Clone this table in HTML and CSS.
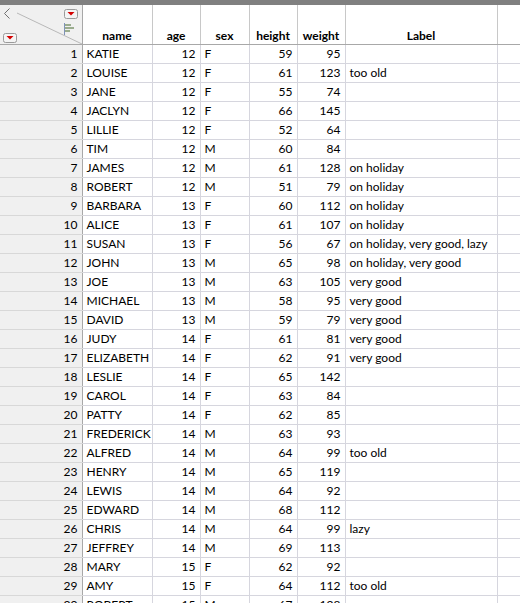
FILE: index.html
```html
<!DOCTYPE html>
<html>
<head>
<meta charset="utf-8">
<link rel="stylesheet" href="styles.css">
</head>
<body>
<div class="topbar"></div>
<table class="grid">
  <colgroup>
    <col class="c-row"><col class="c-name"><col class="c-age"><col class="c-sex"><col class="c-height"><col class="c-weight"><col class="c-label"><col class="c-extra">
  </colgroup>
  <thead>
    <tr>
      <th class="corner">
        <svg width="82" height="39" viewBox="0 0 82 39">
          <line x1="17" y1="8" x2="82" y2="39" stroke="#b8b8b8" stroke-width="1"/>
          <path d="M9.5 3.5 L4.5 8.5 L9.5 13.5" fill="none" stroke="#707070" stroke-width="1"/>
          <rect x="64.5" y="4.5" width="13" height="9" rx="2" fill="#f4f4f4" stroke="#9a9a9a"/>
          <path d="M67.5 7 L74.5 7 L71 10.5 Z" fill="#d40000"/>
          <rect x="3.5" y="28.5" width="13" height="9" rx="2" fill="#f4f4f4" stroke="#9a9a9a"/>
          <path d="M6.5 31 L13.5 31 L10 34.5 Z" fill="#d40000"/>
          <line x1="64.5" y1="18" x2="64.5" y2="30" stroke="#7f93b8" stroke-width="1"/>
          <rect x="65" y="19" width="6" height="2" fill="#9aac8e"/>
          <rect x="65" y="22" width="9" height="2" fill="#9aac8e"/>
          <rect x="65" y="25" width="5" height="2" fill="#9aac8e"/>
        </svg>
      </th>
      <th>name</th><th>age</th><th>sex</th><th>height</th><th>weight</th><th>Label</th><th class="extra"></th>
    </tr>
  </thead>
  <tbody>
    <tr><td class="rn">1</td><td>KATIE</td><td class="n">12</td><td>F</td><td class="n">59</td><td class="n">95</td><td></td><td></td></tr>
    <tr><td class="rn">2</td><td>LOUISE</td><td class="n">12</td><td>F</td><td class="n">61</td><td class="n">123</td><td>too old</td><td></td></tr>
    <tr><td class="rn">3</td><td>JANE</td><td class="n">12</td><td>F</td><td class="n">55</td><td class="n">74</td><td></td><td></td></tr>
    <tr><td class="rn">4</td><td>JACLYN</td><td class="n">12</td><td>F</td><td class="n">66</td><td class="n">145</td><td></td><td></td></tr>
    <tr><td class="rn">5</td><td>LILLIE</td><td class="n">12</td><td>F</td><td class="n">52</td><td class="n">64</td><td></td><td></td></tr>
    <tr><td class="rn">6</td><td>TIM</td><td class="n">12</td><td>M</td><td class="n">60</td><td class="n">84</td><td></td><td></td></tr>
    <tr><td class="rn">7</td><td>JAMES</td><td class="n">12</td><td>M</td><td class="n">61</td><td class="n">128</td><td>on holiday</td><td></td></tr>
    <tr><td class="rn">8</td><td>ROBERT</td><td class="n">12</td><td>M</td><td class="n">51</td><td class="n">79</td><td>on holiday</td><td></td></tr>
    <tr><td class="rn">9</td><td>BARBARA</td><td class="n">13</td><td>F</td><td class="n">60</td><td class="n">112</td><td>on holiday</td><td></td></tr>
    <tr><td class="rn">10</td><td>ALICE</td><td class="n">13</td><td>F</td><td class="n">61</td><td class="n">107</td><td>on holiday</td><td></td></tr>
    <tr><td class="rn">11</td><td>SUSAN</td><td class="n">13</td><td>F</td><td class="n">56</td><td class="n">67</td><td>on holiday, very good, lazy</td><td></td></tr>
    <tr><td class="rn">12</td><td>JOHN</td><td class="n">13</td><td>M</td><td class="n">65</td><td class="n">98</td><td>on holiday, very good</td><td></td></tr>
    <tr><td class="rn">13</td><td>JOE</td><td class="n">13</td><td>M</td><td class="n">63</td><td class="n">105</td><td>very good</td><td></td></tr>
    <tr><td class="rn">14</td><td>MICHAEL</td><td class="n">13</td><td>M</td><td class="n">58</td><td class="n">95</td><td>very good</td><td></td></tr>
    <tr><td class="rn">15</td><td>DAVID</td><td class="n">13</td><td>M</td><td class="n">59</td><td class="n">79</td><td>very good</td><td></td></tr>
    <tr><td class="rn">16</td><td>JUDY</td><td class="n">14</td><td>F</td><td class="n">61</td><td class="n">81</td><td>very good</td><td></td></tr>
    <tr><td class="rn">17</td><td>ELIZABETH</td><td class="n">14</td><td>F</td><td class="n">62</td><td class="n">91</td><td>very good</td><td></td></tr>
    <tr><td class="rn">18</td><td>LESLIE</td><td class="n">14</td><td>F</td><td class="n">65</td><td class="n">142</td><td></td><td></td></tr>
    <tr><td class="rn">19</td><td>CAROL</td><td class="n">14</td><td>F</td><td class="n">63</td><td class="n">84</td><td></td><td></td></tr>
    <tr><td class="rn">20</td><td>PATTY</td><td class="n">14</td><td>F</td><td class="n">62</td><td class="n">85</td><td></td><td></td></tr>
    <tr><td class="rn">21</td><td>FREDERICK</td><td class="n">14</td><td>M</td><td class="n">63</td><td class="n">93</td><td></td><td></td></tr>
    <tr><td class="rn">22</td><td>ALFRED</td><td class="n">14</td><td>M</td><td class="n">64</td><td class="n">99</td><td>too old</td><td></td></tr>
    <tr><td class="rn">23</td><td>HENRY</td><td class="n">14</td><td>M</td><td class="n">65</td><td class="n">119</td><td></td><td></td></tr>
    <tr><td class="rn">24</td><td>LEWIS</td><td class="n">14</td><td>M</td><td class="n">64</td><td class="n">92</td><td></td><td></td></tr>
    <tr><td class="rn">25</td><td>EDWARD</td><td class="n">14</td><td>M</td><td class="n">68</td><td class="n">112</td><td></td><td></td></tr>
    <tr><td class="rn">26</td><td>CHRIS</td><td class="n">14</td><td>M</td><td class="n">64</td><td class="n">99</td><td>lazy</td><td></td></tr>
    <tr><td class="rn">27</td><td>JEFFREY</td><td class="n">14</td><td>M</td><td class="n">69</td><td class="n">113</td><td></td><td></td></tr>
    <tr><td class="rn">28</td><td>MARY</td><td class="n">15</td><td>F</td><td class="n">62</td><td class="n">92</td><td></td><td></td></tr>
    <tr><td class="rn">29</td><td>AMY</td><td class="n">15</td><td>F</td><td class="n">64</td><td class="n">112</td><td>too old</td><td></td></tr>
    <tr><td class="rn">30</td><td>ROBERT</td><td class="n">15</td><td>M</td><td class="n">67</td><td class="n">128</td><td></td><td></td></tr>
  </tbody>
</table>
</body>
</html>
```
FILE: styles.css
```css
html, body {
  margin: 0;
  padding: 0;
  background: #ffffff;
  overflow: hidden;
}
body {
  font-family: "Lato", "Noto Sans", "Liberation Sans", sans-serif;
  font-size: 12px;
  color: #000;
}
.topbar {
  height: 5px;
  background: #808080;
}
.grid {
  border-collapse: collapse;
  table-layout: fixed;
  width: 540px;
}
.c-row { width: 82px; }
.c-name { width: 70px; }
.c-age { width: 48px; }
.c-sex { width: 49px; }
.c-height { width: 48px; }
.c-weight { width: 48px; }
.c-label { width: 152px; }
.c-extra { width: 43px; }

th {
  height: 38px;
  padding: 0 2px 1px;
  font-weight: bold;
  text-align: center;
  vertical-align: bottom;
  border-left: 1px solid #c8c8c8;
  border-bottom: 1px solid #a8a8a8;
  line-height: 14px;
  white-space: nowrap;
}
th.corner {
  padding: 0;
  height: 39px;
  border-left: none;
  background: #f0f0f0;
  vertical-align: top;
  line-height: 0;
}
th.corner svg { display: block; }

td {
  height: 18px;
  padding: 0 4px;
  border-left: 1px solid #d6d6de;
  border-bottom: 1px solid #d6d6de;
  white-space: nowrap;
  overflow: hidden;
  line-height: 18px;
}
td.n { text-align: right; }
td.rn {
  text-align: right;
  background: #f0f0f0;
  border-left: none;
  border-bottom: 1px solid #d8d8d8;
  padding-right: 4px;
}
td.rn + td, th.corner + th { border-left: 1px solid #a8a8a8; }
```
